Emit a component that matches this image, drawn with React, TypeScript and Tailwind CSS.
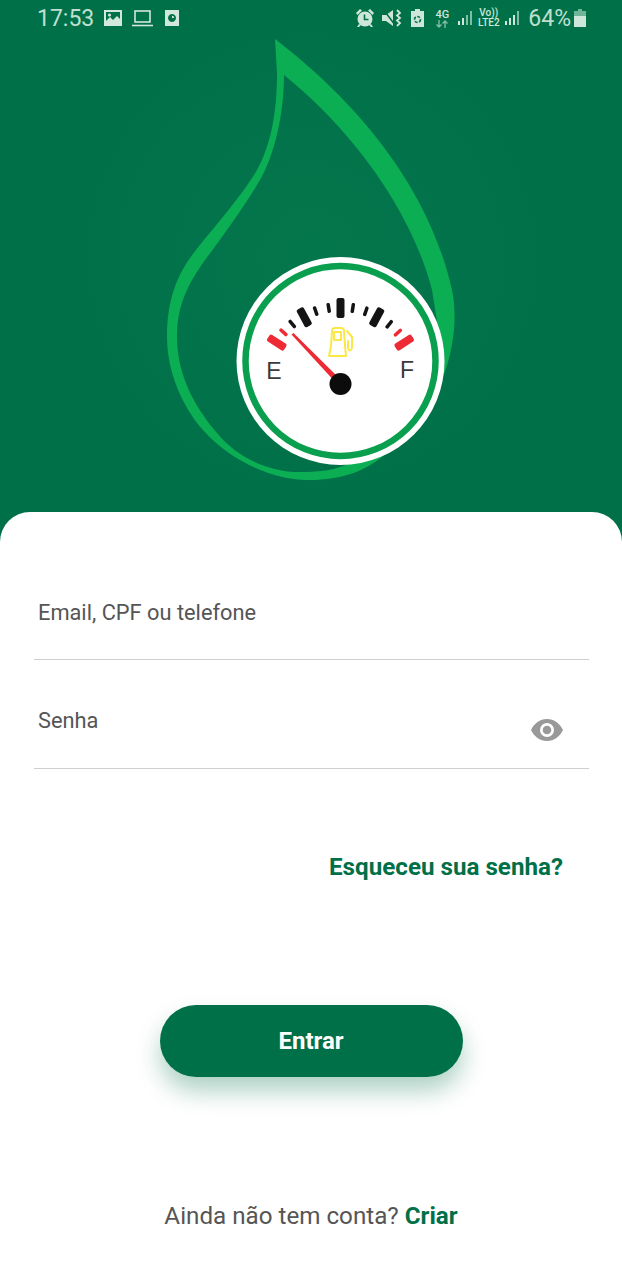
const ROBOTO = "font-['Roboto',sans-serif]";

const bigTicks = [-57, -28.5, 0, 28.5, 57];
const smallTicks = [-48, -39, -19, -9, 9, 19, 39, 48];

const dropOuter =
  "M275 39 C335 85 425 170 452 290 C458 318 453 352 443 377 L395 445 C370 472 340 480 310 480 C270 481 228 458 203 430 C190 416 167 380 167 337 C167 302 176 278 190 258 C204 238 238 202 257 170 C270 147 277 115 277 73 Z";
const dropInner =
  "M284 75 C338 118 408 198 432 290 L440 340 L370 440 L350 463 C335 470 322 472 300 472 C265 472 235 455 217 433 C200 413 177 380 177 337 C177 305 188 284 205 260 C220 240 246 204 260 180 C274 156 284 115 284 75 Z";

function Logo() {
  return (
    <svg viewBox="150 30 320 460" className="-mt-[6px] ml-[150px] block h-[460px] w-[320px]">
      <path fill="#0cae54" fillRule="evenodd" d={`${dropOuter} ${dropInner}`} />
      <circle cx="340.5" cy="361" r="104" fill="#ffffff" />
      <circle cx="340.5" cy="361" r="95" fill="none" stroke="#0a9f4e" strokeWidth="6.500" />
      <g>
        {bigTicks.map((a) => (
          <rect
            key={a}
            x="336.500"
            y="298"
            width="8"
            height="20"
            rx="2"
            fill={Math.abs(a) > 50 ? "#ee2a35" : "#141414"}
            transform={`rotate(${a} 340.5 384)`}
          />
        ))}
        {smallTicks.map((a) => (
          <rect
            key={a}
            x="339"
            y="302"
            width="3.500"
            height="10"
            rx="1.500"
            fill={Math.abs(a) > 45 ? "#ee2a35" : "#141414"}
            transform={`rotate(${a} 340.5 384)`}
          />
        ))}
      </g>
      <text x="274" y="379" textAnchor="middle" fontSize="23" fill="#3a3a3a" fontFamily="Liberation Sans, sans-serif">
        E
      </text>
      <text x="407" y="378" textAnchor="middle" fontSize="23" fill="#3a3a3a" fontFamily="Liberation Sans, sans-serif">
        F
      </text>
      <g fill="none" stroke="#fbe846" strokeWidth="2" strokeLinejoin="round" strokeLinecap="round">
        <path d="M332 331 Q332 328 335 328 H341 Q344 328 344 331 L345 346 L346 356 H329 L331 346 Z" />
        <rect x="334" y="332" width="7" height="8" />
        <path d="M347 331 L352 337 V348 Q350 353 348 348 V341" />
      </g>
      <path d="M291.500 334.500 L293.500 333 L342 381 L338 385 Z" fill="#ee2a35" />
      <circle cx="340.5" cy="384" r="11" fill="#0c0c0c" />
    </svg>
  );
}

function StatusBar() {
  return (
    <div className={`flex h-[36px] items-center justify-between pl-[37px] pr-[36px] text-[23px] text-[#bfe0d0] ${ROBOTO}`}>
      <div className="flex items-center">
        <span className="leading-none">17:53</span>
        <svg viewBox="0 0 18 18" className="ml-[10px] h-[18px] w-[18px]" fill="#d3e8dd">
          <path fillRule="evenodd" d="M0 1h18v16H0z M2 3v9l4-4 3 3 4-4 3 3V3z" />
          <circle cx="5.5" cy="6" r="1.6" />
        </svg>
        <svg viewBox="0 0 22 18" className="ml-[10px] h-[18px] w-[22px]" fill="none" stroke="#d3e8dd" strokeWidth="1.6">
          <rect x="3" y="2" width="15" height="11" />
          <path d="M0 16.5h21" />
        </svg>
        <svg viewBox="0 0 16 18" className="ml-[10px] h-[18px] w-[16px]" fill="#d3e8dd">
          <path fillRule="evenodd" d="M1 1h14v16H1z M8 5a4 4 0 1 0 .01 0z" />
          <circle cx="8" cy="9" r="2.2" fill="#007048" />
          <path d="M8 9V6.8a2.2 2.2 0 0 1 2.2 2.2z" />
        </svg>
      </div>
      <div className="flex items-center">
        <svg viewBox="0 0 20 20" className="h-[20px] w-[20px]" fill="#cfe6da">
          <circle cx="10" cy="11" r="7.5" />
          <path d="M1 5l4-4 2 1.5L2.5 7z M19 5l-4-4-2 1.5L17.5 7z M4 16l-2 3 2 0 2-2z M16 16l2 3-2 0-2-2z" />
          <path d="M9.5 6.500v5h4" fill="none" stroke="#007048" strokeWidth="1.6" />
        </svg>
        <svg viewBox="0 0 20 20" className="ml-[7px] h-[20px] w-[20px]" fill="#cfe6da">
          <path d="M0 7h4l7-5v16l-7-5H0z" />
          <path d="M1 1l12 16" stroke="#007048" strokeWidth="1.6" />
          <path d="M15 2l3 3-3 2.500 3 2.500-3 2.500 3 2.500-3 3" fill="none" stroke="#cfe6da" strokeWidth="1.8" />
        </svg>
        <svg viewBox="0 0 13 18" className="ml-[9px] h-[18px] w-[13px]" fill="#cfe6da">
          <path d="M4 0h5v2h4v16H0V2h4z" />
          <circle cx="6.5" cy="10.5" r="3" fill="none" stroke="#007048" strokeWidth="1.6" strokeDasharray="3 1.5" />
        </svg>
        <div className="ml-[10px] flex w-[16px] flex-col items-center">
          <span className="text-[11px] font-medium leading-[11px] text-[#cfe6da]">4G</span>
          <svg viewBox="0 0 14 8" className="h-[8px] w-[14px]" fill="none" stroke="#7fbea4" strokeWidth="1.4">
            <path d="M4 0v7M1.500 4.500L4 7l2.500-2.500M10 8V1M7.500 3.500L10 1l2.500 2.500" />
          </svg>
        </div>
        <svg viewBox="0 0 18 16" className="ml-[7px] h-[16px] w-[18px]" fill="#cfe6da">
          <rect x="1" y="11" width="2" height="4" />
          <rect x="5" y="8" width="2" height="7" />
          <rect x="9" y="5" width="2" height="10" fill="#7fbea4" />
          <rect x="13" y="1" width="2" height="14" fill="#7fbea4" />
        </svg>
        <div className="ml-[2px] flex w-[23px] flex-col items-center">
          <span className="text-[10px] font-medium leading-[10px] text-[#cfe6da]">Vo))</span>
          <span className="text-[10px] font-medium leading-[10px] text-[#cfe6da]">LTE2</span>
        </div>
        <svg viewBox="0 0 18 16" className="ml-[4px] h-[16px] w-[18px]" fill="#cfe6da">
          <rect x="1" y="11" width="2" height="4" />
          <rect x="5" y="8" width="2" height="7" />
          <rect x="9" y="5" width="2" height="10" />
          <rect x="13" y="1" width="2" height="14" fill="#7fbea4" />
        </svg>
        <span className="ml-[6px] leading-none">64%</span>
        <svg viewBox="0 0 12 18" className="ml-[3px] h-[18px] w-[12px]">
          <path d="M4 0h4v2h4v16H0V2h4z" fill="#cfe6da" />
          <path d="M4 0h4v2h4v5H0V2h4z" fill="#6fb59a" />
        </svg>
      </div>
    </div>
  );
}

export default function App() {
  return (
    <div className={`flex h-[1280px] w-[622px] flex-col overflow-hidden bg-white ${ROBOTO}`}>
      <header className="h-[560px] shrink-0 bg-[#007048] bg-[radial-gradient(circle_at_311px_260px,#04764c_0,#007048_240px)]">
        <StatusBar />
        <Logo />
      </header>

      <main className="-mt-[48px] flex flex-1 flex-col rounded-t-[30px] bg-white">
        <div className="ml-[34px] mr-[33px] mt-[74px] flex h-[74px] items-start border-b border-[#cfcfcf] pl-[4px] text-[21.8px] leading-[54px] text-[#555555]">
          Email, CPF ou telefone
        </div>
        <div className="ml-[34px] mr-[33px] flex h-[109px] items-start justify-between border-b border-[#cfcfcf] pl-[4px] pr-[26px] pt-[35px] text-[21.8px] leading-[54px] text-[#555555]">
          <span className="-mt-[1px] leading-[54px]">Senha</span>
          <svg viewBox="0 0 32 22" className="mt-[24px] h-[22px] w-[32px]">
            <path
              fill="#999999"
              fillRule="evenodd"
              d="M16 0C9 0 3 4.500 0 11c3 6.500 9 11 16 11s13-4.500 16-11C29 4.500 23 0 16 0z M16 18a7 7 0 1 1 0-14 7 7 0 0 1 0 14z"
            />
            <circle cx="16" cy="11" r="4.300" fill="#999999" />
          </svg>
        </div>

        <a className="mr-[59px] mt-[82px] self-end text-[24.2px] font-bold leading-[32px] text-[#007048]">
          Esqueceu sua senha?
        </a>

        <button className="mx-auto mt-[122px] h-[72px] w-[303px] rounded-full bg-[#007048] text-[24px] font-bold text-white shadow-[0_14px_24px_rgba(0,111,71,0.32)]">
          Entrar
        </button>

        <p className="mt-[123px] text-center text-[24.2px] leading-[32px] text-[#555555]">
          Ainda não tem conta? <span className="font-bold text-[#007048]">Criar</span>
        </p>
      </main>
    </div>
  );
}
